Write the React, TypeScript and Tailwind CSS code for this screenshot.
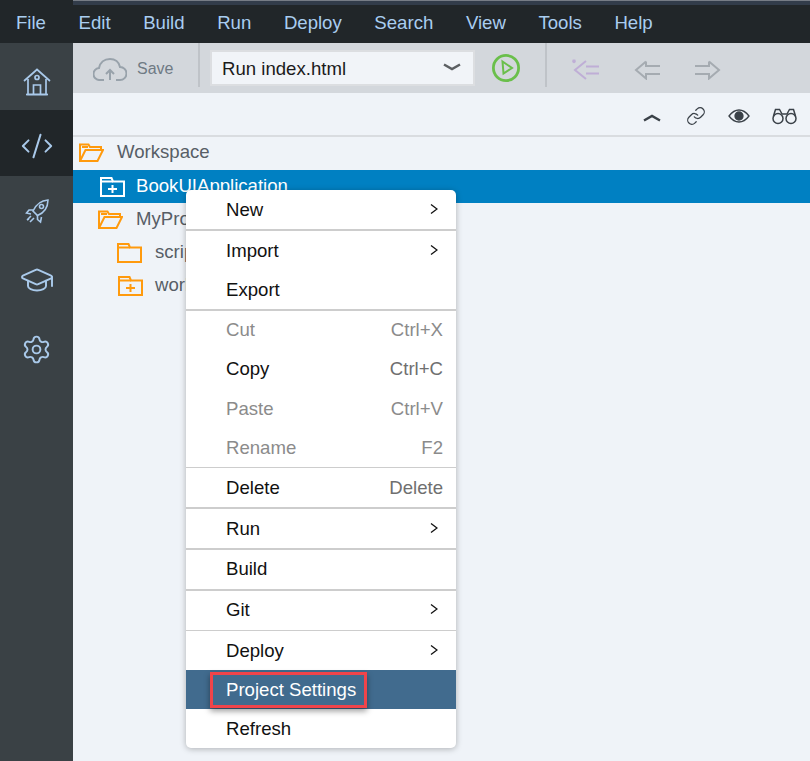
import { CodeXml, GraduationCap, Link, Settings } from 'lucide-react';

const menuBar = ['File', 'Edit', 'Build', 'Run', 'Deploy', 'Search', 'View', 'Tools', 'Help'];

type Item = { label: string; shortcut?: string; arrow?: boolean; disabled?: boolean; active?: boolean; sep?: string; height?: string };

const menuItems: Item[] = [
  { label: 'New', arrow: true, sep: 'h-[2px]' },
  { label: 'Import', arrow: true },
  { label: 'Export', sep: 'h-[1.5px]' },
  { label: 'Cut', shortcut: 'Ctrl+X', disabled: true },
  { label: 'Copy', shortcut: 'Ctrl+C', height: 'h-[39.5px]' },
  { label: 'Paste', shortcut: 'Ctrl+V', disabled: true },
  { label: 'Rename', shortcut: 'F2', disabled: true, sep: 'h-[1.25px]' },
  { label: 'Delete', shortcut: 'Delete', sep: 'h-[1.75px]' },
  { label: 'Run', arrow: true, sep: 'h-[1.75px]' },
  { label: 'Build', sep: 'h-[1.75px]' },
  { label: 'Git', arrow: true, sep: 'h-[1.75px]' },
  { label: 'Deploy', arrow: true },
  { label: 'Project Settings', active: true },
  { label: 'Refresh' },
];

function OpenFolder() {
  return (
    <svg viewBox="0 0 25 19" className="h-[19px] w-[25px]" fill="none" stroke="#ff9a0d" strokeWidth="2">
      <path d="M1 18V1.5h8.5L11 4h11v3" />
      <path d="M3 4h6" />
      <path d="M1 18h17.5L24 7H6.5L1 18Z" />
    </svg>
  );
}

function PlusFolder({ color, plus }: { color: string; plus?: boolean }) {
  return (
    <svg viewBox="0 0 25 20" className="h-5 w-[25px]" fill="none" stroke={color} strokeWidth="2">
      <path d="M1 19V1h10.5l1.5 3.5h11V19H1Z" />
      <path d="M1 4.5h12" />
      {plus && <path d="M8 12h9M12.5 8v8" />}
    </svg>
  );
}

function HomeIcon() {
  return (
    <svg viewBox="0 0 28 28" className="h-7 w-7" fill="none" stroke="#a9c9ea" strokeWidth="1.7">
      <path d="M1 13 14 1.5 27 13" />
      <path d="M5 11v15.5h18V11" />
      <circle cx="14" cy="9.5" r="2" />
      <path d="M10.5 26v-9h7v9" />
      <path d="M3 26.5h22" />
    </svg>
  );
}

function RocketIcon() {
  return (
    <svg viewBox="0 0 24 25" className="h-[25px] w-6" fill="none" stroke="#a9c9ea" strokeWidth="1.6">
      <path d="M23 1c-7 .5-12 4.5-15 11l4.5 4.5C19 14 22.8 8.5 23 1Z" />
      <circle cx="16.5" cy="7.5" r="2" />
      <path d="M8.5 11H4L1.5 14l4.5 1M12.5 16v4.5l3 2.5 1-5" />
      <path d="M6 17l-4 4M9 19l-4 4M4 20l-2 1" />
    </svg>
  );
}

function TreeRow({ icon, label, indent, selected }: { icon: React.ReactNode; label: string; indent: string; selected?: boolean }) {
  return (
    <div className={`flex h-[33px] items-center ${selected ? 'bg-[#0080c2] text-white' : 'text-[#575e66]'} ${indent}`}>
      {icon}
      <span className="pb-[2px]">{label}</span>
    </div>
  );
}

export default function App() {
  return (
    <div className="relative flex h-[761px] w-[810px] flex-col overflow-hidden bg-[#eff3f8] font-['Liberation_Sans',Arial,sans-serif] text-[18.6px]">
      {/* Top strip and menu bar */}
      <div className="flex h-[5px] bg-[#212629]">
        <div className="w-[73px]" />
        <div className="flex-1 border-t border-[#767c85] bg-[#323c4a]" />
      </div>
      <div className="flex h-[38px] items-center bg-[#212629] pb-[3px] text-[#a9cdf0]">
        {menuBar.map((m) => (
          <span key={m} className="px-[16.3px] first:pl-4">
            {m}
          </span>
        ))}
      </div>

      <div className="flex flex-1">
        {/* Sidebar */}
        <div className="flex w-[73px] flex-col bg-[#3a4145] text-[#a9c9ea]">
          <div className="flex h-[67px] items-center justify-center pt-[11px]">
            <HomeIcon />
          </div>
          <div className="flex h-[66px] items-center justify-center bg-[#212629] pt-[6px]">
            <CodeXml size={34} strokeWidth={1.4} />
          </div>
          <div className="flex h-[70px] items-center justify-center">
            <RocketIcon />
          </div>
          <div className="flex h-[68px] items-center justify-center">
            <GraduationCap size={36} strokeWidth={1.3} />
          </div>
          <div className="flex h-[68px] items-center justify-center pt-[2px]">
            <Settings size={31} strokeWidth={1.5} />
          </div>
        </div>

        <div className="flex flex-1 flex-col">
          {/* Main toolbar */}
          <div className="flex h-[50px] items-center bg-[#d3d7dc]">
            <div className="ml-5 flex items-center text-[#6f7a84]">
              <svg viewBox="0 0 34 23" className="mt-[3px] h-[23px] w-[34px]" fill="none" stroke="#98a2ab" strokeWidth="2">
                <path d="M11 22H7a6 6 0 0 1-1-12C7 5 11 1 17 1c5 0 9 3 10 8a6.5 6.5 0 0 1 0 13h-4" />
                <path d="M17 22v-9M13 16l4-4 4 4" />
              </svg>
              <span className="ml-[10px] mt-[2px] w-[36px] text-[16px]">Save</span>
            </div>
            <div className="ml-[25px] h-11 w-[2px] self-start bg-[#bfc3c8]" />
            <div className="ml-[10px] flex h-9 w-[265px] items-center justify-between border-[2px] border-[#dcdee1] bg-[#f1f4f8] pl-[10px] pr-[12px] text-[#1b1b1b]">
              <span className="pt-[2px]">Run index.html</span>
              <svg viewBox="0 0 18 8" className="-mt-[2px] h-2 w-[18px]" fill="none" stroke="#5c5f62" strokeWidth="2.5">
                <path d="M1 1.5 9 6l8-4.5" />
              </svg>
            </div>
            <svg viewBox="0 0 30 30" className="ml-4 h-[30px] w-[30px]" fill="none" stroke="#6abf4b" strokeWidth="2.8">
              <circle cx="15" cy="15" r="12.6" />
              <path strokeWidth="2" d="M11.5 8.5 21 15l-8.500 5.500-1-12Z" />
            </svg>
            <div className="ml-[24px] h-11 w-[2px] self-start bg-[#bfc3c8]" />
            <svg viewBox="0 0 28 22" className="ml-[25px] mt-[3px] h-[22px] w-[28px]" fill="none" stroke="#bfaed6" strokeWidth="2">
              <path d="M14 2 3 11l11 9M14 7.5h13M14 14.5h13" />
              <path d="M1 0.5l2 3.500M3 0.5 1 4M0 2.2h4" strokeWidth="1.2" />
            </svg>
            <svg viewBox="0 0 27 20" className="ml-[34px] mt-[3px] h-5 w-[27px]" fill="none" stroke="#a5abb1" strokeWidth="2">
              <path d="M12 1.5 2 10l10 8.5V14h14M12 1.5V6h14" />
            </svg>
            <svg viewBox="0 0 27 20" className="ml-[33px] mt-[3px] h-5 w-[27px]" fill="none" stroke="#a5abb1" strokeWidth="2">
              <path d="M15 1.5 25 10l-10 8.5V14H1M15 1.5V6H1" />
            </svg>
          </div>

          {/* Secondary toolbar */}
          <div className="flex h-[44px] items-center justify-end gap-[22px] border-b-2 border-[#d9dce0] pr-[13px] pt-[3px] text-[#3a4148]">
            <svg viewBox="0 0 18 8" className="mt-[4px] mr-[3px] h-2 w-[18px]" fill="none" stroke="#3a4148" strokeWidth="2.4">
              <path d="M1 6.5 9 2l8 4.5" />
            </svg>
            <Link size={20} strokeWidth={1.5} />
            <svg viewBox="0 0 22 14" className="h-[14px] w-[22px]" fill="none" stroke="#3a4148" strokeWidth="1.3">
              <path d="M1 7c3-4 6-6 10-6s7 2 10 6c-3 4-6 6-10 6S4 11 1 7Z" />
              <circle cx="11" cy="7" r="4" fill="#3a4148" />
            </svg>
            <svg viewBox="0 0 25 18" className="h-[18px] w-[25px]" fill="none" stroke="#3a4148" strokeWidth="1.5">
              <circle cx="6" cy="11.5" r="5" />
              <circle cx="19" cy="11.5" r="5" />
              <path d="M1.5 9 3.5 2.5h4L10 7M23.5 9l-2-6.5h-4L15 7M10 7h5" />
            </svg>
          </div>

          {/* Tree */}
          <div className="flex h-[33px] items-center pb-[3px] pl-[6px] text-[#575e66]">
            <OpenFolder />
            <span className="ml-[13px]">Workspace</span>
          </div>
          <TreeRow selected indent="pl-[27px] gap-[11px]" label="BookUIApplication" icon={<PlusFolder color="#ffffff" plus />} />
          <TreeRow indent="pl-[25px] gap-[13px]" label="MyProject" icon={<OpenFolder />} />
          <TreeRow indent="pl-[44px] gap-[13px]" label="script" icon={<PlusFolder color="#ff9a0d" />} />
          <TreeRow indent="pl-[45px] gap-[12px]" label="work" icon={<PlusFolder color="#ff9a0d" plus />} />
        </div>
      </div>

      {/* Context menu */}
      <div className="absolute left-[186px] top-[190px] w-[270px] rounded-[5px] bg-white shadow-[0_1px_6px_rgba(0,0,0,0.28)]">
        {menuItems.map((item) => (
          <div key={item.label}>
            <div
              className={`flex items-center justify-between pl-10 pr-[13px] ${item.height ?? 'h-[39px]'} ${
                item.active ? 'bg-[#416b8e] text-white' : item.disabled ? 'text-[#8b8b8b]' : 'text-[#111111]'
              }`}
            >
              {item.active ? (
                <span className="-ml-4 flex h-9 items-center border-[3px] border-[#f0444a] pl-[13px] pr-[8px] shadow-[0_3px_6px_rgba(0,0,0,0.4)]">
                  {item.label}
                </span>
              ) : (
                <span>{item.label}</span>
              )}
              {item.shortcut && <span className={item.disabled ? '' : 'text-[#6f6f6f]'}>{item.shortcut}</span>}
              {item.arrow && (
                <svg viewBox="0 0 8 10" className="-mt-[2px] mr-[5px] h-[10px] w-2" fill="none" stroke="#111111" strokeWidth="1.3">
                  <path d="M1 .5 7 5l-6 4.5" />
                </svg>
              )}
            </div>
            {item.sep && <div className={`bg-[#cdcdcd] ${item.sep}`} />}
          </div>
        ))}
      </div>
    </div>
  );
}
